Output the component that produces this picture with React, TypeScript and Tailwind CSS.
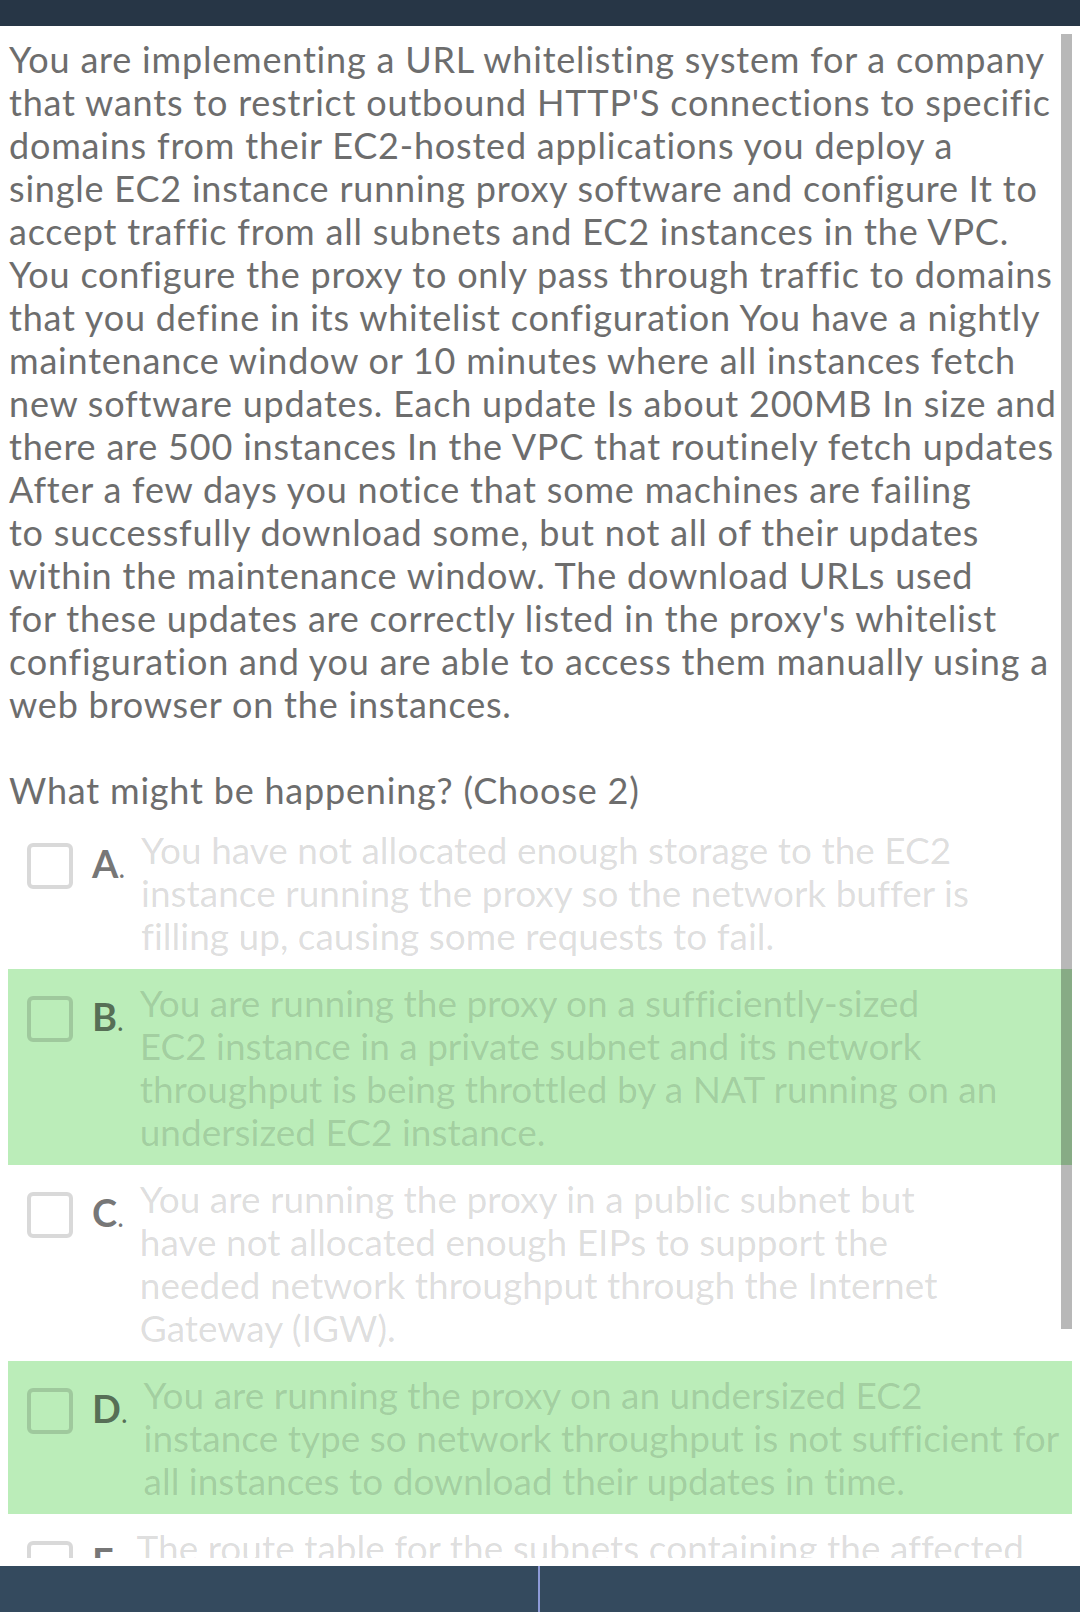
import React from "react";

const questionLines = [
  "You are implementing a URL whitelisting system for a company",
  "that wants to restrict outbound HTTP'S connections to specific",
  "domains from their EC2-hosted applications you deploy a",
  "single EC2 instance running proxy software and configure It to",
  "accept traffic from all subnets and EC2 instances in the VPC.",
  "You configure the proxy to only pass through traffic to domains",
  "that you define in its whitelist configuration You have a nightly",
  "maintenance window or 10 minutes where all instances fetch",
  "new software updates. Each update Is about 200MB In size and",
  "there are 500 instances In the VPC that routinely fetch updates",
  "After a few days you notice that some machines are failing",
  "to successfully download some, but not all of their updates",
  "within the maintenance window. The download URLs used",
  "for these updates are correctly listed in the proxy's whitelist",
  "configuration and you are able to access them manually using a",
  "web browser on the instances.",
];

type Opt = { key: string; lines: string[]; correct: boolean };

const options: Opt[] = [
  {
    key: "A",
    correct: false,
    lines: [
      "You have not allocated enough storage to the EC2",
      "instance running the proxy so the network buffer is",
      "filling up, causing some requests to fail.",
    ],
  },
  {
    key: "B",
    correct: true,
    lines: [
      "You are running the proxy on a sufficiently-sized",
      "EC2 instance in a private subnet and its network",
      "throughput is being throttled by a NAT running on an",
      "undersized EC2 instance.",
    ],
  },
  {
    key: "C",
    correct: false,
    lines: [
      "You are running the proxy in a public subnet but",
      "have not allocated enough EIPs to support the",
      "needed network throughput through the Internet",
      "Gateway (IGW).",
    ],
  },
  {
    key: "D",
    correct: true,
    lines: [
      "You are running the proxy on an undersized EC2",
      "instance type so network throughput is not sufficient for",
      "all instances to download their updates in time.",
    ],
  },
  {
    key: "E",
    correct: false,
    lines: [
      "The route table for the subnets containing the affected",
      "EC2 instances is not configured to direct network",
      "traffic for the software update locations to the proxy.",
    ],
  },
];

function Option({ opt }: { opt: Opt }) {
  return (
    <div className={opt.correct ? "flex py-3 bg-[#bbedb9]" : "flex py-3"}>
      <div className="ml-[19px] mt-[15px] w-[46px] h-[46px] shrink-0 rounded-[6px] border-[4px] border-black/15" />
      <div className="ml-[19px] mt-[14px] shrink-0 text-[38px] leading-[43px] text-black/55">
        <span className="font-bold">{opt.key}</span>
        <span className="text-[28px]">.</span>
      </div>
      <div className="ml-[16px] text-[37px] leading-[43px] text-black/[0.14] [font-variant-ligatures:none]">
        {opt.lines.map((l, i) => (
          <div key={i} className="whitespace-nowrap">
            {l}
          </div>
        ))}
      </div>
    </div>
  );
}

export default function App() {
  return (
    <div className="w-[1080px] h-[1612px] flex flex-col bg-white font-['Lato',sans-serif] overflow-hidden">
      <div className="h-[26px] shrink-0 bg-[#273646]" />
      <div className="relative h-[1532px] shrink-0 overflow-hidden px-2">
        <div className="pt-3 text-[36px] leading-[43px] tracking-[0.8px] text-[#6d6d6d] pl-[1px] [font-variant-ligatures:none]">
          {questionLines.map((l, i) => (
            <div key={i} className="whitespace-nowrap">
              {l}
            </div>
          ))}
          <div className="h-[43px]" />
          <div className="whitespace-nowrap">What might be happening? (Choose 2)</div>
        </div>
        <div className="mt-1">
          {options.map((o) => (
            <Option key={o.key} opt={o} />
          ))}
        </div>
        <div className="absolute right-2 top-2 w-[11px] h-[1295px] bg-black/[0.28]" />
      </div>
      <div className="h-2 shrink-0" />
      <div className="relative flex-1 bg-[#344a5e]">
        <div className="absolute left-[538px] top-0 bottom-0 w-[2px] bg-[#8e9bd8]" />
      </div>
    </div>
  );
}
